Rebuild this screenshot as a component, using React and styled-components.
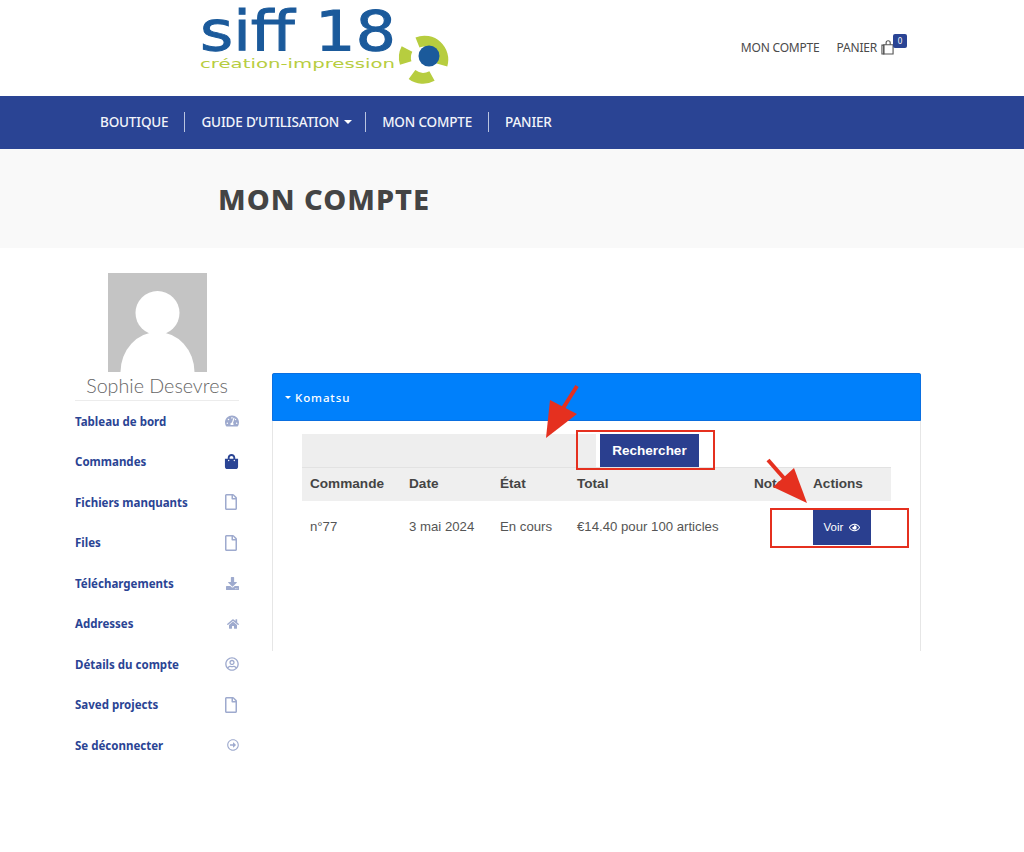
import React from "react";
import styled, { createGlobalStyle } from "styled-components";
import {
  FaTachometerAlt,
  FaShoppingBag,
  FaRegFile,
  FaDownload,
  FaHome,
  FaRegUserCircle,
  FaRegArrowAltCircleRight,
  FaRegEye,
} from "react-icons/fa";

const GlobalStyle = createGlobalStyle`
  html, body {
    margin: 0;
    padding: 0;
    background: #fff;
    font-family: "Noto Sans", "Liberation Sans", sans-serif;
  }
  * { box-sizing: border-box; }
`;

const menuItems = [
  { label: "Tableau de bord", icon: FaTachometerAlt, size: 14 },
  { label: "Commandes", icon: FaShoppingBag, size: 15, active: true },
  { label: "Fichiers manquants", icon: FaRegFile, size: 16 },
  { label: "Files", icon: FaRegFile, size: 16 },
  { label: "Téléchargements", icon: FaDownload, size: 13 },
  { label: "Addresses", icon: FaHome, size: 12 },
  { label: "Détails du compte", icon: FaRegUserCircle, size: 14 },
  { label: "Saved projects", icon: FaRegFile, size: 16 },
  { label: "Se déconnecter", icon: FaRegArrowAltCircleRight, size: 12 },
];

const navItems = ["BOUTIQUE", "GUIDE D’UTILISATION", "MON COMPTE", "PANIER"];

const Logo = () => (
  <LogoSvg viewBox="0 0 260 96" width="260" height="96">
    <text
      x="0"
      y="50"
      fontFamily="'DejaVu Sans', sans-serif"
      fontSize="55"
      fill="#1b5a9b"
      stroke="#1b5a9b"
      strokeWidth="1"
      textLength="196"
      lengthAdjust="spacingAndGlyphs"
    >
      siff 18
    </text>
    <text
      x="0"
      y="68"
      fontFamily="'DejaVu Sans', sans-serif"
      fontSize="13"
      fill="#b7cd3f"
      textLength="195"
      lengthAdjust="spacingAndGlyphs"
    >
      création-impression
    </text>
    <g fill="none" stroke="#b7cd3f" strokeWidth="11">
      <path d="M217.5 42.5 A18.5 18.5 0 0 1 242 65" />
      <path d="M207 49 A18.5 18.5 0 0 0 205.7 63" strokeWidth="12" />
      <path d="M212 74.5 A18.5 18.5 0 0 0 232 76" />
    </g>
    <circle cx="229" cy="56" r="10.5" fill="#1b5a9b" />
  </LogoSvg>
);

const Avatar = () => (
  <AvatarSvg viewBox="0 0 99 99" width="99" height="99">
    <rect width="99" height="99" fill="#c4c4c4" />
    <ellipse cx="49.5" cy="99" rx="37" ry="40" fill="#fff" />
    <circle cx="49.5" cy="40" r="22" fill="#fff" />
  </AvatarSvg>
);

const BagOutline = () => (
  <svg viewBox="0 0 14 16" width="13" height="15" fill="none" stroke="#555" strokeWidth="1.2">
    <path d="M3 5h10v10H3z" />
    <path d="M1 5.5h2V15H1z" />
    <path d="M5.5 5V3a2.2 2.2 0 0 1 4.4 0v2" />
  </svg>
);

const Arrow = ({ left, top, width, height, shaft, head }) => (
  <ArrowSvg $left={left} $top={top} width={width} height={height} viewBox={`0 0 ${width} ${height}`}>
    <line {...shaft} stroke="#e5301f" strokeWidth="4" />
    <polygon points={head} fill="#e5301f" />
  </ArrowSvg>
);

export default function App() {
  return (
    <Page>
      <GlobalStyle />
      <TopBar>
        <Logo />
        <TopLinks>
          <TopLink>MON COMPTE</TopLink>
          <TopLink>
            PANIER
            <CartIcon>
              <BagOutline />
              <CartBadge>0</CartBadge>
            </CartIcon>
          </TopLink>
        </TopLinks>
      </TopBar>

      <NavBar>
        {navItems.map((item, i) => (
          <NavItem key={item} $last={i === navItems.length - 1}>
            {item}
            {i === 1 && <Caret />}
          </NavItem>
        ))}
      </NavBar>

      <TitleBand>
        <PageTitle>MON COMPTE</PageTitle>
      </TitleBand>

      <Content>
        <Sidebar>
          <AvatarWrap>
            <Avatar />
          </AvatarWrap>
          <UserName>Sophie Desevres</UserName>
          <Menu>
            {menuItems.map(({ label, icon: Icon, size, active }) => (
              <MenuRow key={label}>
                <span>{label}</span>
                <MenuIcon $active={active} $size={size}>
                  <Icon />
                </MenuIcon>
              </MenuRow>
            ))}
          </Menu>
        </Sidebar>

        <Panel>
          <PanelHeader>
            <SmallCaret />
            Komatsu
          </PanelHeader>
          <PanelBody>
            <SearchRow>
              <SearchFill />
              <SearchButton>Rechercher</SearchButton>
            </SearchRow>
            <HeadRow>
              <HeadCell>Commande</HeadCell>
              <HeadCell>Date</HeadCell>
              <HeadCell>État</HeadCell>
              <HeadCell>Total</HeadCell>
              <HeadCell>Notes</HeadCell>
              <HeadCell>Actions</HeadCell>
            </HeadRow>
            <DataRow>
              <DataCell>n°77</DataCell>
              <DataCell>3 mai 2024</DataCell>
              <DataCell>En cours</DataCell>
              <DataCell>€14.40 pour 100 articles</DataCell>
              <DataCell />
              <ActionCell>
                <ViewButton>
                  Voir <FaRegEye />
                </ViewButton>
              </ActionCell>
            </DataRow>
          </PanelBody>

          <RedBox $left={303} $top={57} $width={139} $height={40} />
          <RedBox $left={497} $top={135} $width={139} $height={40} />
          <Arrow
            left={269}
            top={10}
            width={40}
            height={58}
            shaft={{ x1: 35, y1: 3, x2: 18, y2: 30 }}
            head="4,55 8,17 35,31"
          />
          <Arrow
            left={491}
            top={84}
            width={46}
            height={50}
            shaft={{ x1: 4, y1: 3, x2: 26, y2: 28 }}
            head="43,46 30,11 9,30"
          />
        </Panel>
      </Content>
    </Page>
  );
}

// ===== Styled Components =====

const Page = styled.div`
  width: 1024px;
  height: 852px;
  overflow: hidden;
  background: #fff;
`;

const TopBar = styled.header`
  height: 96px;
  padding: 0 130px 0 200px;
  display: flex;
  align-items: flex-start;
  justify-content: space-between;
`;

const LogoSvg = styled.svg`
  display: block;
  flex: none;
`;

const TopLinks = styled.div`
  display: flex;
  gap: 17px;
  padding-top: 37px;
`;

const TopLink = styled.a`
  display: flex;
  align-items: center;
  height: 20px;
  font-size: 12px;
  color: #4a4a4a;
  letter-spacing: -0.2px;
`;

const CartIcon = styled.span`
  position: relative;
  display: inline-flex;
  margin-left: 4px;
`;

const CartBadge = styled.span`
  position: absolute;
  left: 12px;
  top: -6px;
  width: 14px;
  height: 14px;
  border-radius: 2px;
  background: #2a4494;
  color: #fff;
  font-size: 8px;
  line-height: 14px;
  text-align: center;
  letter-spacing: 0;
`;

const NavBar = styled.nav`
  height: 53px;
  background: #2a4494;
  padding: 0 0 2px 84px;
  display: flex;
  align-items: center;
`;

const NavItem = styled.a`
  display: flex;
  align-items: center;
  height: 20px;
  padding: 0 16px;
  font-size: 13.5px;
  font-weight: 500;
  color: #f2f4fa;
  letter-spacing: -0.17px;
  border-right: ${(p) => (p.$last ? "none" : "1px solid #b9c4e0")};
`;

const Caret = styled.span`
  margin: 0 -3px 0 5px;
  border-left: 4px solid transparent;
  border-right: 4px solid transparent;
  border-top: 4px solid #fff;
`;

const TitleBand = styled.div`
  height: 99px;
  background: #f9f9f9;
  padding-left: 218px;
  display: flex;
  align-items: center;
`;

const PageTitle = styled.h1`
  margin: 0;
  font-size: 29px;
  font-weight: 800;
  letter-spacing: 1px;
  color: #444;
`;

const Content = styled.main`
  display: flex;
  align-items: flex-start;
  padding: 25px 0 0 75px;
  gap: 33px;
`;

const Sidebar = styled.aside`
  width: 164px;
  flex: none;
`;

const AvatarWrap = styled.div`
  display: flex;
  justify-content: center;
`;

const AvatarSvg = styled.svg`
  display: block;
`;

const UserName = styled.div`
  height: 29px;
  border-bottom: 1px solid #ececec;
  font-family: "Lato", sans-serif;
  font-size: 19.7px;
  font-weight: 300;
  line-height: 28px;
  text-align: center;
  color: #666;
  white-space: nowrap;
`;

const Menu = styled.ul`
  list-style: none;
  margin: 0;
  padding: 0;
`;

const MenuRow = styled.li`
  height: 40.5px;
  display: flex;
  align-items: center;
  justify-content: space-between;
  font-size: 11.5px;
  font-weight: 700;
  color: #2a4494;
  white-space: nowrap;
`;

const MenuIcon = styled.span`
  display: flex;
  font-size: ${(p) => p.$size}px;
  color: #2a4494;
  opacity: ${(p) => (p.$active ? 1 : 0.45)};
`;

const Panel = styled.section`
  position: relative;
  width: 649px;
  height: 278px;
  margin-top: 100px;
  border-left: 1px solid #e6e6e6;
  border-right: 1px solid #e6e6e6;
`;

const PanelHeader = styled.div`
  height: 48px;
  margin: 0 -1px;
  padding-left: 12px;
  background: #0080fb;
  border: 1px solid #0a6fe0;
  border-radius: 2px 2px 0 0;
  display: flex;
  align-items: center;
  gap: 4px;
  color: #fff;
  font-size: 11.5px;
  font-weight: 500;
  letter-spacing: 0.9px;
`;

const SmallCaret = styled.span`
  border-left: 3px solid transparent;
  border-right: 3px solid transparent;
  border-top: 3px solid #fff;
`;

const PanelBody = styled.div`
  width: 589px;
  margin-left: 29px;
  padding-top: 13px;
  font-family: "Liberation Sans", Arial, sans-serif;
`;

const SearchRow = styled.div`
  height: 33px;
  display: flex;
`;

const SearchFill = styled.div`
  width: 294px;
  background: #eee;
`;

const SearchButton = styled.button`
  width: 99px;
  margin-left: 4px;
  border: none;
  padding: 0;
  background: #2a3f8f;
  color: #fff;
  font-family: inherit;
  font-size: 13.5px;
  font-weight: 700;
`;

const HeadRow = styled.div`
  height: 34px;
  padding-bottom: 3px;
  display: grid;
  grid-template-columns: 99px 91px 77px 177px 59px 86px;
  align-items: center;
  background: #efefef;
  border-top: 1px solid #e2e2e2;
`;

const HeadCell = styled.div`
  padding-left: 8px;
  font-size: 13.6px;
  font-weight: 700;
  color: #444;
`;

const DataRow = styled.div`
  height: 52px;
  display: grid;
  grid-template-columns: 99px 91px 77px 177px 59px 86px;
  align-items: center;
`;

const DataCell = styled.div`
  padding: 0 0 2px 8px;
  font-size: 13.2px;
  color: #555;
  white-space: nowrap;
`;

const ActionCell = styled.div`
  padding-left: 8px;
  display: flex;
`;

const ViewButton = styled.a`
  width: 58px;
  height: 35px;
  display: flex;
  align-items: center;
  justify-content: center;
  gap: 6px;
  background: #2a3f8f;
  color: #fff;
  font-size: 11.5px;
  svg {
    font-size: 11px;
  }
`;

const RedBox = styled.div`
  position: absolute;
  left: ${(p) => p.$left}px;
  top: ${(p) => p.$top}px;
  width: ${(p) => p.$width}px;
  height: ${(p) => p.$height}px;
  border: 2.5px solid #e5301f;
`;

const ArrowSvg = styled.svg`
  position: absolute;
  left: ${(p) => p.$left}px;
  top: ${(p) => p.$top}px;
  display: block;
`;
